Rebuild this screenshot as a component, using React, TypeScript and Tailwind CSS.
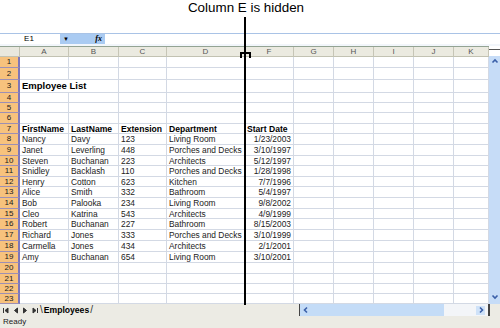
import React from "react";

type Row = {
  cells: string[];
  bold?: boolean;
};

const cols = ["A", "B", "C", "D", "F", "G", "H", "I", "J", "K"];

const people: string[][] = [
  ["Nancy", "Davy", "123", "Living Room", "1/23/2003"],
  ["Janet", "Leverling", "448", "Porches and Decks", "3/10/1997"],
  ["Steven", "Buchanan", "223", "Architects", "5/12/1997"],
  ["Snidley", "Backlash", "110", "Porches and Decks", "1/28/1998"],
  ["Henry", "Cotton", "623", "Kitchen", "7/7/1996"],
  ["Alice", "Smith", "332", "Bathroom", "5/4/1997"],
  ["Bob", "Palooka", "234", "Living Room", "9/8/2002"],
  ["Cleo", "Katrina", "543", "Architects", "4/9/1999"],
  ["Robert", "Buchanan", "227", "Bathroom", "8/15/2003"],
  ["Richard", "Jones", "333", "Porches and Decks", "3/10/1999"],
  ["Carmella", "Jones", "434", "Architects", "2/1/2001"],
  ["Amy", "Buchanan", "654", "Living Room", "3/10/2001"],
];

const blank: Row = { cells: [] };

const rows: Row[] = [
  blank,
  blank,
  { cells: ["Employee List"] },
  blank,
  blank,
  blank,
  { cells: ["FirstName", "LastName", "Extension", "Department", "Start Date"], bold: true },
  ...people.map((p) => ({ cells: p })),
  blank,
  blank,
  blank,
  blank,
];

const gridLine = "border-r border-b border-[#d3d9e4]";

function RowCells({ row, idx }: { row: Row; idx: number }) {
  const n = idx + 1;
  const rowHead = (
    <div className="flex items-center justify-center border-b border-r-2 border-b-[#9d8fb4] border-r-[#7d76b8] bg-[#f7c27d] text-[8px] leading-none text-[#1a1a1a]">
      {n}
    </div>
  );

  // title row: text spills over A and B
  if (n === 3) {
    return (
      <>
        {rowHead}
        <div className={`col-span-2 flex items-center pl-[2px] text-[9.5px] font-bold ${gridLine}`}>
          {row.cells[0]}
        </div>
        {cols.slice(2).map((c) => (
          <div key={c} className={gridLine} />
        ))}
      </>
    );
  }

  return (
    <>
      {rowHead}
      {cols.map((c, i) => {
        const text = row.cells[i] ?? "";
        const isDate = i === 4 && !row.bold;
        return (
          <div
            key={c}
            className={`flex items-center overflow-visible whitespace-nowrap px-[2px] text-[8.4px] leading-none ${gridLine} ${
              row.bold ? "font-bold text-[8.6px]" : "text-[#222]"
            } ${isDate ? "justify-end" : ""}`}>
            {text}
          </div>
        );
      })}
    </>
  );
}

function Chevron({ dir }: { dir: "up" | "down" | "left" | "right" }) {
  const d = {
    up: "M1.5 5.5 L4 3 L6.5 5.5",
    down: "M1.5 2.5 L4 5 L6.5 2.5",
    left: "M5 1.5 L2.5 4 L5 6.5",
    right: "M3 1.5 L5.5 4 L3 6.5",
  }[dir];
  return (
    <svg width="8" height="8" viewBox="0 0 8 8">
      <path d={d} fill="none" stroke="#3a5fa8" strokeWidth="1.6" />
    </svg>
  );
}

function NavTri({ left, bar }: { left?: boolean; bar?: boolean }) {
  return (
    <svg width="7" height="7" viewBox="0 0 7 7">
      {left ? (
        <path d={bar ? "M6 1 L3 3.5 L6 6 Z M1.5 1 V6" : "M5.5 1 L2.5 3.5 L5.5 6 Z"} fill="#333" stroke="#333" strokeWidth="1" />
      ) : (
        <path d={bar ? "M1 1 L4 3.5 L1 6 Z M5.5 1 V6" : "M1.5 1 L4.5 3.5 L1.5 6 Z"} fill="#333" stroke="#333" strokeWidth="1" />
      )}
    </svg>
  );
}

export default function App() {
  return (
    <div className="relative flex h-[328px] w-[500px] flex-col overflow-hidden bg-white font-['Liberation_Sans',Arial,sans-serif] text-black">
      <div className="h-[33px] pt-[0px] text-center text-[13.4px] leading-[15px] pl-[-10px]">
        <span className="relative left-[-4px]">Column E is hidden</span>
      </div>

      {/* formula bar */}
      <div className="flex h-[12px] border-t border-[#a9c3e6] text-[8px] leading-none">
        <div className="flex w-[60px] items-center justify-center pr-[2px]">E1</div>
        <div className="flex w-[45px] items-center justify-between bg-[#aacbf2] px-[3px]">
          <span className="text-[6px]">▼</span>
          <span className="font-['Liberation_Serif',serif] text-[8px] font-bold italic">fx</span>
        </div>
        <div className="flex-1" />
      </div>
      <div className="h-[2px] bg-[#f2f6fb]" />

      {/* sheet */}
      <div className="flex">
        <div className="grid w-[489px] grid-cols-[20px_49px_50px_48px_78px_49px_40px_40px_40px_40px_35px] grid-rows-[10px_11px_12px_13px_10px_10px_11px_10px_11px_11px_10px_11px_10px_11px_11px_10px_11px_11px_11px_11px_11px_10px_10px_10px] border-t border-[#93a393]">
          <div className="border-r border-b border-[#c2c2b2] bg-[#e9e8de]" />
          {cols.map((c) => (
            <div
              key={c}
              className="flex items-center justify-center border-r border-b border-r-[#c6c5b6] border-b-[#c2c2b2] bg-[#ebeae0] text-[8px] leading-none text-[#555]">
              {c}
            </div>
          ))}
          {rows.map((r, i) => (
            <RowCells key={i} row={r} idx={i} />
          ))}
        </div>

        {/* vertical scrollbar */}
        <div className="flex w-[11px] flex-col">
          <div className="h-[10px] bg-white pt-[3px]">
            <div className="h-[1px] bg-[#555]" />
          </div>
          <div className="flex flex-1 flex-col items-center justify-between bg-[#c6dcf7] pb-[3px] pt-[1px]">
            <Chevron dir="up" />
            <Chevron dir="down" />
          </div>
        </div>
      </div>

      {/* sheet tabs + horizontal scroll */}
      <div className="flex h-[12px] items-center bg-[#ecebe4] text-[8px] leading-none">
        <div className="flex w-[40px] items-center gap-[3px] pl-[2px]">
          <NavTri left bar />
          <NavTri left />
          <NavTri />
          <NavTri bar />
        </div>
        <div className="flex h-full items-center">
          <span className="text-[10px] leading-none text-[#333]">\</span>
          <span className="px-[1px] text-[8.6px] font-bold">Employees</span>
          <span className="text-[10px] leading-none text-[#333]">/</span>
        </div>
        <div className="flex-1" />
        <div className="flex h-full w-[191px] items-center border-l border-r-2 border-l-[#444] border-r-[#444]">
          <div className="flex h-full w-[144px] items-center bg-[#c4dcf7] pl-[2px]">
            <Chevron dir="left" />
          </div>
          <div className="flex h-full flex-1 items-center justify-end bg-[#f3f5f8] pr-[3px]">
            <div className="flex h-[9px] w-[9px] items-center justify-center bg-[#cfe2f8]">
              <Chevron dir="right" />
            </div>
          </div>
        </div>
        <div className="w-[10px]" />
      </div>

      {/* status bar */}
      <div className="flex h-[12px] items-center bg-[#ecebe4] pl-[3px] text-[8px] leading-none text-[#222]">
        Ready
      </div>

      {/* annotation: hidden column marker */}
      <div className="absolute left-[244px] top-[17px] h-[288px] w-[2px] bg-black" />
      <div className="absolute left-[240px] top-[52px] h-[6px] w-[11px] border-x-2 border-t-2 border-black" />
    </div>
  );
}
